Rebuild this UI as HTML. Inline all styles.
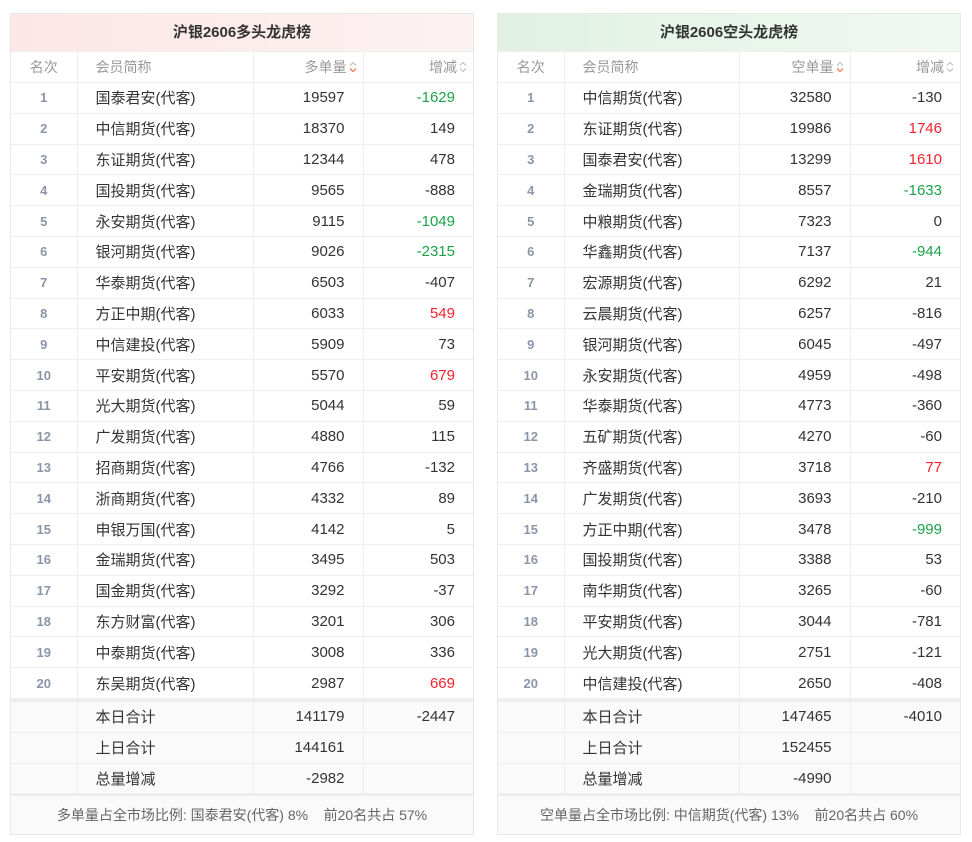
<!DOCTYPE html>
<html><head><meta charset="utf-8"><style>
*{margin:0;padding:0;box-sizing:border-box}
body{width:972px;height:842px;background:#fff;font-family:"Liberation Sans","Noto Sans CJK SC",sans-serif;color:#333;position:relative;overflow:hidden}
.box{position:absolute;top:13px;width:464px;border:1px solid #e8e8e8}
.title{height:37px;line-height:37px;text-align:center;font-weight:bold;font-size:15px;color:#333}
.l .title{background:linear-gradient(90deg,#fde6e6,#fdf2f2)}
.r .title{background:linear-gradient(90deg,#e0f1e4,#f1f8f2)}
table{border-collapse:collapse;table-layout:fixed;width:462px;font-size:15px}
td,th{border:1px solid #eee;height:30.8px;padding:0}
tr>*:first-child{border-left:none}tr>*:last-child{border-right:none}
th{font-weight:normal;color:#999;height:31px;font-size:14px}
.c0{text-align:center;color:#8a96a8;font-weight:bold;font-size:13px}
.c1{padding-left:18px;text-align:left}
.c2,.c3{text-align:right;padding-right:18px}
th.c2,th.c3{padding-right:6px}
.g{color:#1aa34a}.rd{color:#f5222d}
.sum td{background:#fafafa}
.sep td{height:3px;background:#eee;border:none}
.foot{height:40px;line-height:38px;text-align:center;font-size:14px;color:#666;background:#fafafa;border-top:2px solid #eee}
.ar{display:inline-block;width:8px;height:12px;vertical-align:-1px;margin-left:2px}
</style></head><body>
<div class="box l" style="left:10px">
<div class="title">沪银2606多头龙虎榜</div>
<table>
<colgroup><col style="width:66px"><col style="width:176px"><col style="width:110px"><col style="width:110px"></colgroup>
<tr><th class="c0" style="font-weight:normal;color:#999;font-size:14px">名次</th><th class="c1">会员简称</th><th class="c2">多单量<svg class="ar" viewBox="0 0 8 12"><path d="M1 4.5L4 1.5 7 4.5" fill="none" stroke="#bbb"/><path d="M1 7.5L4 10.5 7 7.5" fill="none" stroke="#f5612d"/></svg></th><th class="c3">增减<svg class="ar" viewBox="0 0 8 12"><path d="M1 4.5L4 1.5 7 4.5M1 7.5L4 10.5 7 7.5" fill="none" stroke="#bbb"/></svg></th></tr>
<tr><td class="c0">1</td><td class="c1">国泰君安(代客)</td><td class="c2">19597</td><td class="c3 g">-1629</td></tr>
<tr><td class="c0">2</td><td class="c1">中信期货(代客)</td><td class="c2">18370</td><td class="c3">149</td></tr>
<tr><td class="c0">3</td><td class="c1">东证期货(代客)</td><td class="c2">12344</td><td class="c3">478</td></tr>
<tr><td class="c0">4</td><td class="c1">国投期货(代客)</td><td class="c2">9565</td><td class="c3">-888</td></tr>
<tr><td class="c0">5</td><td class="c1">永安期货(代客)</td><td class="c2">9115</td><td class="c3 g">-1049</td></tr>
<tr><td class="c0">6</td><td class="c1">银河期货(代客)</td><td class="c2">9026</td><td class="c3 g">-2315</td></tr>
<tr><td class="c0">7</td><td class="c1">华泰期货(代客)</td><td class="c2">6503</td><td class="c3">-407</td></tr>
<tr><td class="c0">8</td><td class="c1">方正中期(代客)</td><td class="c2">6033</td><td class="c3 rd">549</td></tr>
<tr><td class="c0">9</td><td class="c1">中信建投(代客)</td><td class="c2">5909</td><td class="c3">73</td></tr>
<tr><td class="c0">10</td><td class="c1">平安期货(代客)</td><td class="c2">5570</td><td class="c3 rd">679</td></tr>
<tr><td class="c0">11</td><td class="c1">光大期货(代客)</td><td class="c2">5044</td><td class="c3">59</td></tr>
<tr><td class="c0">12</td><td class="c1">广发期货(代客)</td><td class="c2">4880</td><td class="c3">115</td></tr>
<tr><td class="c0">13</td><td class="c1">招商期货(代客)</td><td class="c2">4766</td><td class="c3">-132</td></tr>
<tr><td class="c0">14</td><td class="c1">浙商期货(代客)</td><td class="c2">4332</td><td class="c3">89</td></tr>
<tr><td class="c0">15</td><td class="c1">申银万国(代客)</td><td class="c2">4142</td><td class="c3">5</td></tr>
<tr><td class="c0">16</td><td class="c1">金瑞期货(代客)</td><td class="c2">3495</td><td class="c3">503</td></tr>
<tr><td class="c0">17</td><td class="c1">国金期货(代客)</td><td class="c2">3292</td><td class="c3">-37</td></tr>
<tr><td class="c0">18</td><td class="c1">东方财富(代客)</td><td class="c2">3201</td><td class="c3">306</td></tr>
<tr><td class="c0">19</td><td class="c1">中泰期货(代客)</td><td class="c2">3008</td><td class="c3">336</td></tr>
<tr><td class="c0">20</td><td class="c1">东吴期货(代客)</td><td class="c2">2987</td><td class="c3 rd">669</td></tr>
<tr class="sep"><td colspan="4"></td></tr>
<tr class="sum"><td></td><td class="c1">本日合计</td><td class="c2">141179</td><td class="c3">-2447</td></tr>
<tr class="sum"><td></td><td class="c1">上日合计</td><td class="c2">144161</td><td class="c3"></td></tr>
<tr class="sum"><td></td><td class="c1">总量增减</td><td class="c2">-2982</td><td class="c3"></td></tr>
</table>
<div class="foot">多单量占全市场比例: 国泰君安(代客) 8%&nbsp;&nbsp;&nbsp;&nbsp;前20名共占 57%</div>
</div>

<div class="box r" style="left:497px">
<div class="title">沪银2606空头龙虎榜</div>
<table>
<colgroup><col style="width:66px"><col style="width:175px"><col style="width:111px"><col style="width:110px"></colgroup>
<tr><th class="c0" style="font-weight:normal;color:#999;font-size:14px">名次</th><th class="c1">会员简称</th><th class="c2">空单量<svg class="ar" viewBox="0 0 8 12"><path d="M1 4.5L4 1.5 7 4.5" fill="none" stroke="#bbb"/><path d="M1 7.5L4 10.5 7 7.5" fill="none" stroke="#f5612d"/></svg></th><th class="c3">增减<svg class="ar" viewBox="0 0 8 12"><path d="M1 4.5L4 1.5 7 4.5M1 7.5L4 10.5 7 7.5" fill="none" stroke="#bbb"/></svg></th></tr>
<tr><td class="c0">1</td><td class="c1">中信期货(代客)</td><td class="c2">32580</td><td class="c3">-130</td></tr>
<tr><td class="c0">2</td><td class="c1">东证期货(代客)</td><td class="c2">19986</td><td class="c3 rd">1746</td></tr>
<tr><td class="c0">3</td><td class="c1">国泰君安(代客)</td><td class="c2">13299</td><td class="c3 rd">1610</td></tr>
<tr><td class="c0">4</td><td class="c1">金瑞期货(代客)</td><td class="c2">8557</td><td class="c3 g">-1633</td></tr>
<tr><td class="c0">5</td><td class="c1">中粮期货(代客)</td><td class="c2">7323</td><td class="c3">0</td></tr>
<tr><td class="c0">6</td><td class="c1">华鑫期货(代客)</td><td class="c2">7137</td><td class="c3 g">-944</td></tr>
<tr><td class="c0">7</td><td class="c1">宏源期货(代客)</td><td class="c2">6292</td><td class="c3">21</td></tr>
<tr><td class="c0">8</td><td class="c1">云晨期货(代客)</td><td class="c2">6257</td><td class="c3">-816</td></tr>
<tr><td class="c0">9</td><td class="c1">银河期货(代客)</td><td class="c2">6045</td><td class="c3">-497</td></tr>
<tr><td class="c0">10</td><td class="c1">永安期货(代客)</td><td class="c2">4959</td><td class="c3">-498</td></tr>
<tr><td class="c0">11</td><td class="c1">华泰期货(代客)</td><td class="c2">4773</td><td class="c3">-360</td></tr>
<tr><td class="c0">12</td><td class="c1">五矿期货(代客)</td><td class="c2">4270</td><td class="c3">-60</td></tr>
<tr><td class="c0">13</td><td class="c1">齐盛期货(代客)</td><td class="c2">3718</td><td class="c3 rd">77</td></tr>
<tr><td class="c0">14</td><td class="c1">广发期货(代客)</td><td class="c2">3693</td><td class="c3">-210</td></tr>
<tr><td class="c0">15</td><td class="c1">方正中期(代客)</td><td class="c2">3478</td><td class="c3 g">-999</td></tr>
<tr><td class="c0">16</td><td class="c1">国投期货(代客)</td><td class="c2">3388</td><td class="c3">53</td></tr>
<tr><td class="c0">17</td><td class="c1">南华期货(代客)</td><td class="c2">3265</td><td class="c3">-60</td></tr>
<tr><td class="c0">18</td><td class="c1">平安期货(代客)</td><td class="c2">3044</td><td class="c3">-781</td></tr>
<tr><td class="c0">19</td><td class="c1">光大期货(代客)</td><td class="c2">2751</td><td class="c3">-121</td></tr>
<tr><td class="c0">20</td><td class="c1">中信建投(代客)</td><td class="c2">2650</td><td class="c3">-408</td></tr>
<tr class="sep"><td colspan="4"></td></tr>
<tr class="sum"><td></td><td class="c1">本日合计</td><td class="c2">147465</td><td class="c3">-4010</td></tr>
<tr class="sum"><td></td><td class="c1">上日合计</td><td class="c2">152455</td><td class="c3"></td></tr>
<tr class="sum"><td></td><td class="c1">总量增减</td><td class="c2">-4990</td><td class="c3"></td></tr>
</table>
<div class="foot">空单量占全市场比例: 中信期货(代客) 13%&nbsp;&nbsp;&nbsp;&nbsp;前20名共占 60%</div>
</div>
</body></html>
